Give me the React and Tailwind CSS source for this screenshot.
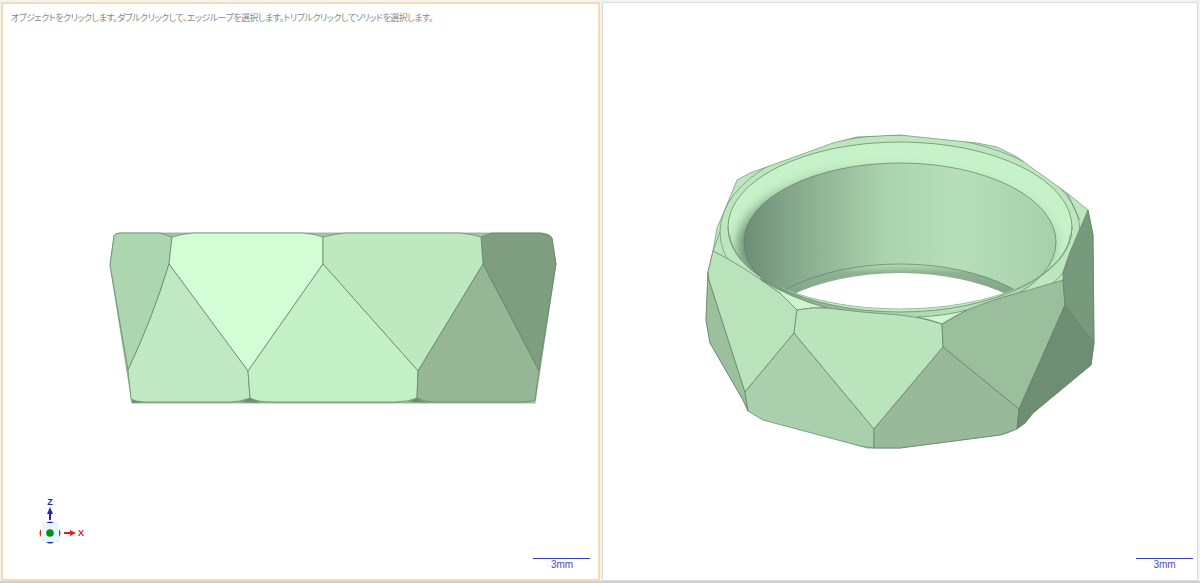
const line = '#5f7f63';

const outline = 'M737 180 L750 173 L833 143 L857 137 L900 135 L977 143 L997 147 L1017 157 L1067 193 L1088 210 L1093 235 L1094 343 L1091 365 L1033 413 L1025 423 Q1012 433 1000 435 L900 448 L867 448 L748 411 L743 400 L710 343 L706 320 L708 272 L713 251 L717 228 L728 202 Z';

// flat shaded front view of the ring
const FrontRing = () => (
    <g stroke={line} strokeWidth="0.7" strokeLinejoin="round">
        <path d="M114 236 Q115 233 122 233 L540 233 Q550 234 552 238 L556 264 L535 403 L132 403 L110 265 Z" fill="#a3c8a5" stroke="#7f9f82" />
        {/* far left + far right facets */}
        <path d="M114 236 Q115 233 122 233 L160 233 L172 237 L169 264 Q152 320 128 370 L110 265 Z" fill="#acd6af" />
        <path d="M481 237 L492 233 L541 233 Q550 234 552 238 L556 264 L539 371 L483 264 Z" fill="#7e9e7f" />
        {/* upper facets */}
        <path d="M172 237 Q182 234 193 233 L303 233 Q315 234 323 237 L323 264 L248 371 L169 264 Z" fill="#d3fdd5" />
        <path d="M323 237 Q335 234 345 233 L460 233 Q472 234 481 237 L483 264 L418 371 L323 264 Z" fill="#bde8c0" />
        {/* lower facets */}
        <path d="M169 264 L248 371 L250 398 Q240 402 230 402 L145 402 Q136 402 131 399 L128 370 Q152 320 169 264 Z" fill="#c0e8c2" />
        <path d="M323 264 L418 371 L417 398 Q408 402 395 402 L272 402 Q258 402 250 398 L248 371 Z" fill="#c3f0c5" />
        <path d="M483 264 L539 371 L535 400 Q530 402 520 402 L432 402 Q422 401 417 398 L418 371 Z" fill="#96b796" />
        {/* dark slivers along the bottom */}
        <path d="M131 399 Q136 402 145 403 L132 403 Z" fill="#6f8f73" stroke="none" />
        <path d="M240 402 Q246 400 250 398 Q254 400 262 403 Z" fill="#6f8f73" stroke="none" />
        <path d="M408 402 Q413 400 417 398 Q421 401 430 403 Z" fill="#6f8f73" stroke="none" />
    </g>
);

// iso view, drawn back to front
const IsoRing = () => (
    <>
        <defs>
            <linearGradient id="wall" gradientUnits="userSpaceOnUse" x1="744" y1="0" x2="1056" y2="0">
                <stop offset="0" stopColor="#6e8e74" />
                <stop offset="0.2" stopColor="#8bae90" />
                <stop offset="0.45" stopColor="#aad2ad" />
                <stop offset="0.68" stopColor="#b6dfb9" />
                <stop offset="1" stopColor="#a8cfab" />
            </linearGradient>
            <linearGradient id="lip" gradientUnits="userSpaceOnUse" x1="0" y1="264" x2="0" y2="300">
                <stop offset="0" stopColor="#b5deb8" />
                <stop offset="0.25" stopColor="#8fb193" />
                <stop offset="1" stopColor="#7f9f83" />
            </linearGradient>
            <filter id="soft" x="-20%" y="-20%" width="140%" height="140%">
                <feGaussianBlur stdDeviation="6" />
            </filter>
            <clipPath id="mouth">
                <ellipse cx="900" cy="234" rx="170" ry="75" />
            </clipPath>
            <clipPath id="rimClip">
                <ellipse cx="900" cy="227" rx="172" ry="85" />
            </clipPath>
            <clipPath id="outlineClip">
                <path d={outline} />
            </clipPath>
        </defs>

        {/* silhouette / top face */}
        <path d={outline} fill="#bde6bf" stroke={line} strokeWidth="0.6" />
        <g clipPath="url(#outlineClip)">
            <ellipse cx="900" cy="232" rx="180" ry="97" fill="none" stroke={line} strokeWidth="0.6" />
        </g>

        {/* fillet + inner wall */}
        <ellipse cx="900" cy="227" rx="172" ry="85" fill="#c6f2c9" stroke={line} strokeWidth="0.7" />
        <g clipPath="url(#rimClip)">
            <ellipse cx="897" cy="247" rx="160" ry="80" fill="url(#wall)" filter="url(#soft)" />
        </g>
        <ellipse cx="900" cy="242" rx="156" ry="79" fill="url(#wall)" stroke={line} strokeWidth="0.7" />

        {/* far lip and the opening */}
        <g clipPath="url(#mouth)">
            <ellipse cx="900" cy="343" rx="155" ry="79" fill="url(#lip)" stroke={line} strokeWidth="0.7" />
            <ellipse cx="900" cy="352" rx="156" ry="79" fill="#fff" />
        </g>
        <path d="M730 234 A170 75 0 0 0 1070 234 L1072 227 A172 85 0 0 1 728 227 Z" fill="#c0eac3" stroke="none" />
        <path d="M730 234 A170 75 0 0 0 1070 234" fill="none" stroke="#8fb193" strokeWidth="0.7" />
        <path d="M728 227 A172 85 0 0 0 1072 227" fill="none" stroke={line} strokeWidth="0.7" />

        {/* front facets */}
        <g stroke={line} strokeWidth="0.7" strokeLinejoin="round">
            <path d="M708 272 L706 320 L710 343 L743 400 L748 411 L745 392 L709 280 Z" fill="#9cc09e" />
            <path d="M713 251 Q735 262 760 279 L780 293 L797 310 L794 333 L745 392 L709 280 L708 272 Z" fill="#b9e3bb" />
            <path d="M760 279 L780 293 L797 310 Q812 307 827 308 Q790 298 760 279 Z" fill="#cff5d0" />
            <path d="M794 333 L745 392 L748 411 L763 420 L860 446 L874 448 L874 429 Z" fill="#a9cfac" />
            <path d="M797 310 Q812 307 827 308 Q865 313 900 315 Q922 317 942 324 L943 347 L874 429 L794 333 Z" fill="#bae5bc" />
            <path d="M917 317 Q932 320 942 324 Q955 316 967 310 Q945 316 917 317 Z" fill="#cff5d0" />
            <path d="M943 347 L874 429 L874 448 L900 448 L1000 435 L1017 429 L1019 409 Z" fill="#9ab99b" />
            <path d="M942 324 L943 347 L1019 409 L1065 305 L1063 280 Q1030 290 1000 298 Q985 303 967 310 Z" fill="#9bbf9d" />
            <path d="M1065 305 L1019 409 L1017 429 L1025 423 L1033 413 L1091 365 L1094 343 Z" fill="#6f8d72" />
            <path d="M1088 210 L1093 235 L1094 343 L1065 305 L1063 280 L1063 272 L1070 252 Z" fill="#789a7c" />
        </g>
        <path d="M1067 193 L1080 220 M713 251 L720 232" fill="none" stroke={line} strokeWidth="0.6" />
    </>
);

const AxisTriad = () => (
    <>
        <rect x="42" y="523" width="17" height="19" fill="#e6f7f7" />
        <circle cx="50" cy="533" r="3.8" fill="#0b8a1e" />
        <path d="M41 529 Q38 533 41 537 Z M59 529 Q62 533 59 537 Z" fill="#e02020" />
        <path d="M46 523 Q50 520 54 523 Z M46 542 Q50 545 54 542 Z" fill="#2222cc" />
        <path d="M50 507 L53 514 L51 514 L51 520 L49 520 L49 514 L47 514 Z" fill="#2222cc" />
        <path d="M76 533 L70 530 L70 532 L64 532 L64 534 L70 534 L70 536 Z" fill="#e02020" />
        <text x="50" y="505" textAnchor="middle" fontSize="9" fontWeight="700" fill="#2222cc" fontFamily="Liberation Sans">Z</text>
        <text x="81" y="536" textAnchor="middle" fontSize="9" fontWeight="700" fill="#e02020" fontFamily="Liberation Sans">X</text>
    </>
);

export default function App() {
    return (
        <div className="flex w-[1200px] h-[583px] bg-[#f3f3f3] border-b-2 border-[#cfcfcf] overflow-hidden">
            <div className="relative ml-[1px] mt-[2px] w-[599px] h-[579px] bg-white border-2 border-[#f6dab2]">
                <svg className="block" width="595" height="575" viewBox="3 4 595 575">
                    <FrontRing />
                    <AxisTriad />
                </svg>
                <p className="absolute left-[8px] top-[7px] text-[9px] tracking-[-0.52px] leading-[13px] whitespace-nowrap text-[#8a8a8a] [font-feature-settings:'palt'] font-['Noto_Sans_CJK_JP',sans-serif]">
                    オブジェクトをクリックします。ダブルクリックして、エッジループを選択します。トリプルクリックしてソリッドを選択します。
                </p>
                <div className="absolute top-[554px] right-[8px] w-[57px] border-t border-[#3b3bc4] text-center text-[10px] leading-[12px] text-[#4a4ac0] font-['Liberation_Sans',sans-serif]">
                    <div className="pl-[1px]">3mm</div>
                </div>
            </div>
            <div className="relative ml-[2px] mt-[2px] w-[596px] h-[579px] bg-white border border-[#dcdcdc]">
                <svg className="block" width="594" height="577" viewBox="603 3 594 577">
                    <IsoRing />
                </svg>
                <div className="absolute top-[555px] right-[4px] w-[57px] border-t border-[#3b3bc4] text-center text-[10px] leading-[12px] text-[#4a4ac0] font-['Liberation_Sans',sans-serif]">
                    <div>3mm</div>
                </div>
            </div>
        </div>
    );
}
